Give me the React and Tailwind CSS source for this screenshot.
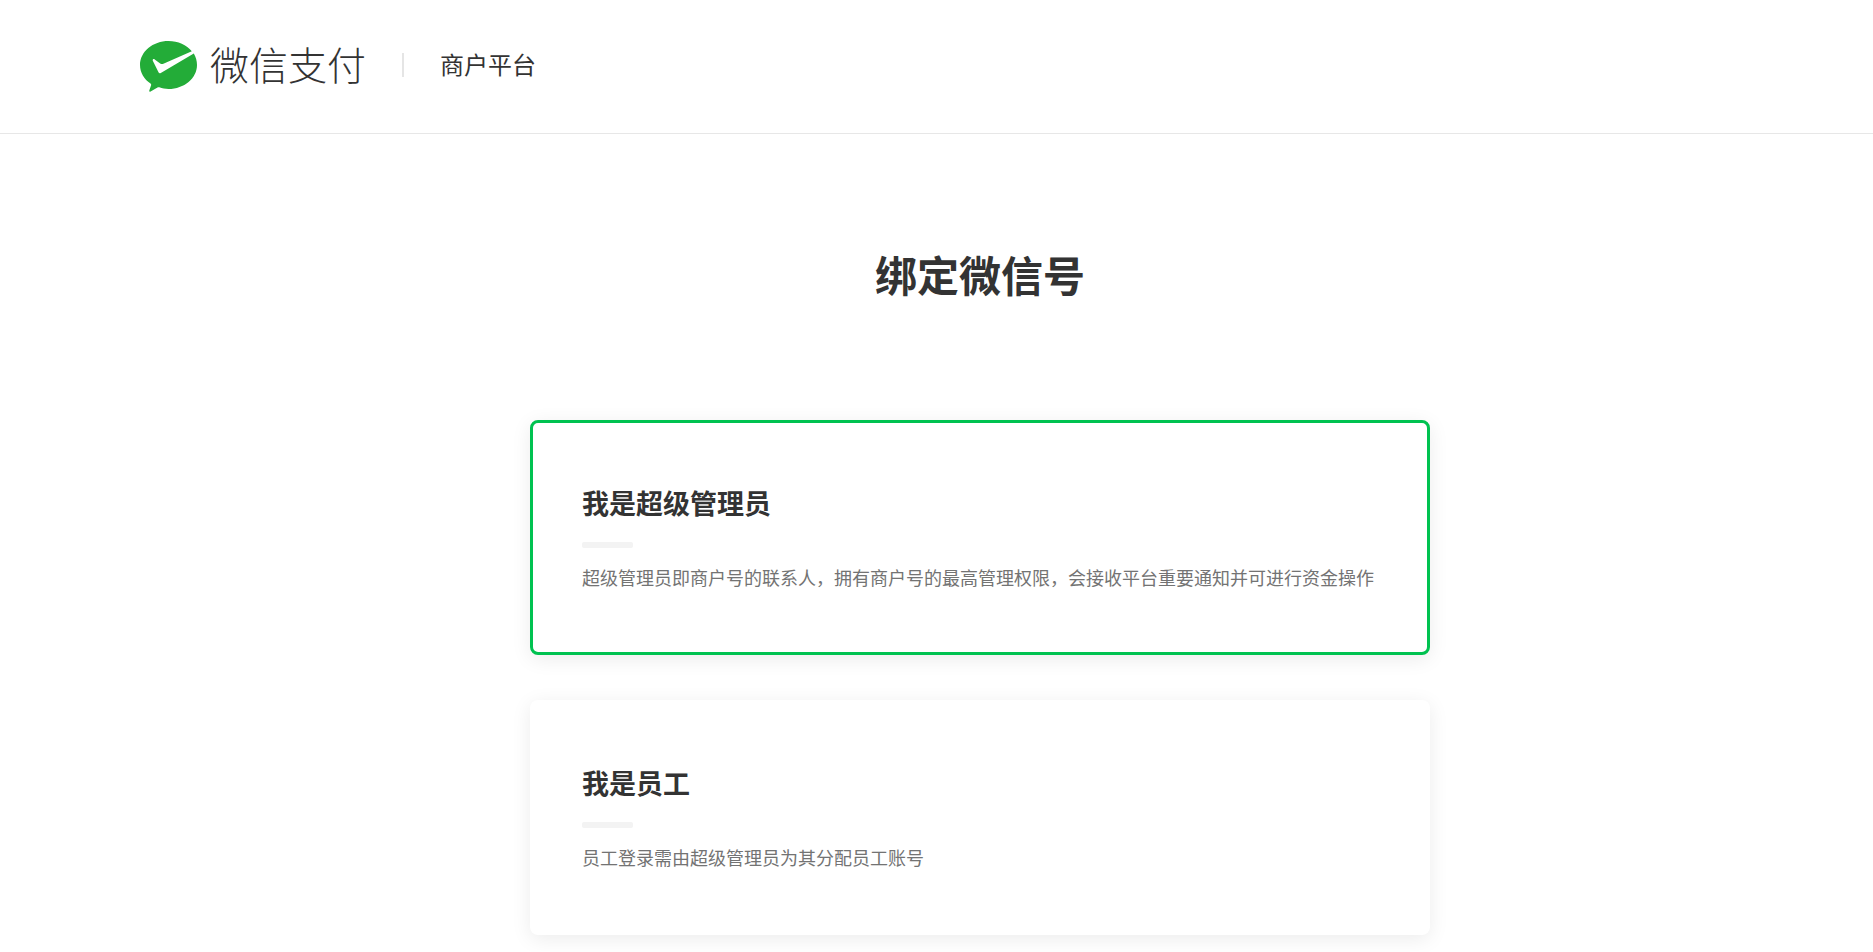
import { useState } from "react";

const roles = [
  {
    id: "admin",
    title: "我是超级管理员",
    desc: "超级管理员即商户号的联系人，拥有商户号的最高管理权限，会接收平台重要通知并可进行资金操作",
  },
  {
    id: "staff",
    title: "我是员工",
    desc: "员工登录需由超级管理员为其分配员工账号",
  },
];

function Logo() {
  return (
    <svg viewBox="0 0 57 51" className="w-[57px] h-[51px]" aria-hidden="true">
      <path
        fill="#23ac38"
        d="M28.5 0C12.8 0 0 10.7 0 24C0 31.5 4.1 38.2 10.5 42.6C11 43 11.3 43.5 11.1 44.2L9.3 49.6C9 50.6 9.7 51.1 10.6 50.5L17.5 46.5C18.1 46.2 18.7 46.1 19.3 46.3C22.2 47.3 25.3 48 28.5 48C44.2 48 57 37.3 57 24C57 20 55.9 16.2 53.8 12.6L20.8 31.9C19.8 32.5 19 32.3 18.5 31.2L12.8 19.7C12.4 18.5 13.5 17.6 14.7 18.4L20.2 22.5C21.2 23.2 22.2 23.3 23.4 22.8L51.8 10.2C46.6 4.1 38.1 0 28.5 0Z"
      />
    </svg>
  );
}

function RoleCard({ role, active, onSelect }) {
  return (
    <button
      type="button"
      aria-pressed={active}
      onClick={onSelect}
      className={`block w-full text-left bg-white border-3 rounded-lg pt-[62px] pb-[61px] px-[49px] shadow-[0_4px_20px_rgba(0,0,0,0.08)] cursor-pointer ${
        active ? "border-[#00c250]" : "border-transparent"
      }`}
    >
      <span className="block text-[27px] leading-9 font-bold text-[#333333]">{role.title}</span>
      <span className="block w-[51px] h-1.5 mt-[21px] rounded-xs bg-[#f3f3f3]" />
      <span className="block mt-[15px] text-lg leading-7 text-[#737373]">{role.desc}</span>
    </button>
  );
}

export default function App() {
  const [selected, setSelected] = useState("admin");

  return (
    <div className="min-h-screen bg-white font-['Noto_Sans_CJK_SC',sans-serif]">
      <header className="flex items-center h-[134px] pl-[140px] border-b border-[#e7e7e7]">
        <a href="#" className="flex items-center gap-[13px]">
          <Logo />
          <span className="pb-1.5 text-[39px] leading-none font-light text-[#333333]">微信支付</span>
        </a>
        <span className="w-0.5 h-6 mx-9 mb-1 bg-[#e5e5e5]" />
        <span className="pb-1.5 text-2xl leading-none text-[#333333]">商户平台</span>
      </header>

      <main className="pl-[87px] pb-4">
        <div className="max-w-[900px] mx-auto">
          <h1 className="pt-[110px] pb-[116px] text-center text-[42px] leading-[60px] font-bold text-[#333333]">
            绑定微信号
          </h1>
          <div className="flex flex-col gap-[45px]">
            {roles.map((role) => (
              <RoleCard
                key={role.id}
                role={role}
                active={selected === role.id}
                onSelect={() => setSelected(role.id)}
              />
            ))}
          </div>
        </div>
      </main>
    </div>
  );
}
